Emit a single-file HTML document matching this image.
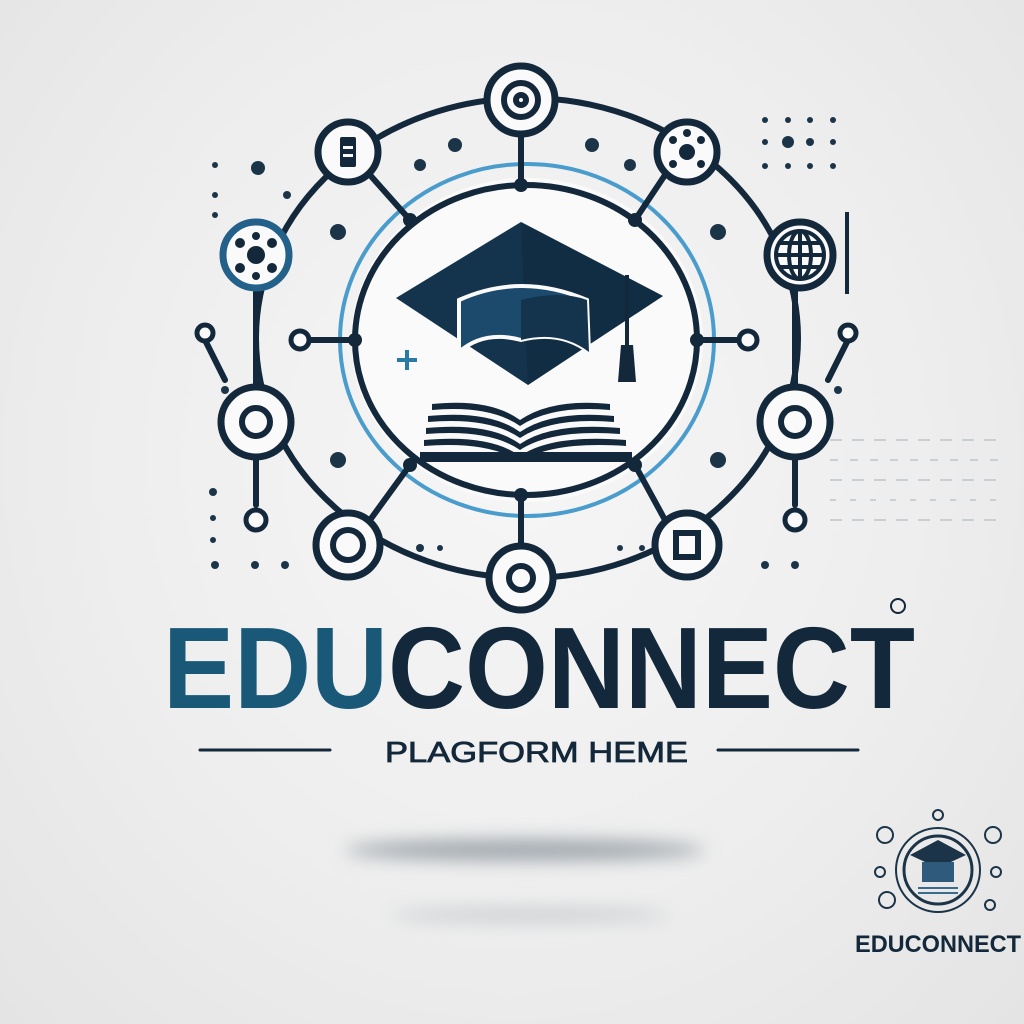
<!DOCTYPE html>
<html><head><meta charset="utf-8"><style>
html,body{margin:0;padding:0;width:1024px;height:1024px;overflow:hidden}
body{background:radial-gradient(ellipse at 50% 45%,#f6f6f6 0%,#eeeeee 55%,#e4e4e4 100%)}
svg{display:block}
</style></head><body>
<svg width="1024" height="1024" viewBox="0 0 1024 1024" xmlns="http://www.w3.org/2000/svg">
<defs>
<filter id="b" x="-50%" y="-200%" width="200%" height="500%"><feGaussianBlur stdDeviation="9"/></filter>
</defs>
<g fill="#1c3448">
<circle cx="215" cy="165" r="3"/><circle cx="258" cy="168" r="7"/><circle cx="287" cy="195" r="4"/><circle cx="215" cy="195" r="3"/><circle cx="215" cy="215" r="3"/>
<circle cx="213" cy="492" r="4"/><circle cx="213" cy="518" r="3"/><circle cx="213" cy="540" r="3"/>
<circle cx="215" cy="565" r="4"/><circle cx="255" cy="565" r="4"/><circle cx="285" cy="565" r="4"/>
<circle cx="420" cy="548" r="4"/><circle cx="440" cy="548" r="3"/><circle cx="620" cy="548" r="3"/><circle cx="642" cy="548" r="3"/>
<circle cx="338" cy="232" r="8"/><circle cx="338" cy="460" r="8"/><circle cx="718" cy="232" r="8"/><circle cx="718" cy="460" r="8"/>
<circle cx="455" cy="145" r="7"/><circle cx="592" cy="145" r="7"/><circle cx="420" cy="165" r="6"/><circle cx="630" cy="165" r="6"/>
<circle cx="225" cy="390" r="4"/><circle cx="838" cy="390" r="4"/>
<circle cx="765" cy="120" r="3"/><circle cx="788" cy="120" r="3"/><circle cx="810" cy="120" r="3"/><circle cx="833" cy="120" r="3"/>
<circle cx="788" cy="142" r="6"/><circle cx="810" cy="142" r="4"/><circle cx="833" cy="142" r="3"/><circle cx="765" cy="142" r="3"/>
<circle cx="765" cy="166" r="3"/><circle cx="788" cy="166" r="3"/><circle cx="810" cy="166" r="3"/><circle cx="833" cy="166" r="3"/>
<circle cx="765" cy="565" r="4"/><circle cx="795" cy="565" r="4"/>
</g>
<g stroke="#c9cfd4" stroke-width="2">
<line x1="830" y1="440" x2="1000" y2="440" stroke-dasharray="12 10"/>
<line x1="830" y1="460" x2="1000" y2="460" stroke-dasharray="8 12"/>
<line x1="830" y1="480" x2="1000" y2="480" stroke-dasharray="12 10"/>
<line x1="830" y1="500" x2="1000" y2="500" stroke-dasharray="6 14"/>
<line x1="830" y1="520" x2="1000" y2="520" stroke-dasharray="12 10"/>
</g>
<ellipse cx="527" cy="340" rx="187" ry="176" fill="none" stroke="#4a9ccc" stroke-width="4"/>
<ellipse cx="527" cy="340" rx="176" ry="162" fill="#fafafa" stroke="none"/>
<g fill="none" stroke="#13283a" stroke-width="6" stroke-linecap="round">
<ellipse cx="527" cy="338" rx="271" ry="240"/>
<ellipse cx="526" cy="340" rx="171" ry="155"/>
<line x1="521" y1="130" x2="521" y2="185"/>
<line x1="521" y1="495" x2="521" y2="550"/>
<line x1="370" y1="175" x2="410" y2="220"/>
<line x1="665" y1="175" x2="635" y2="220"/>
<line x1="370" y1="520" x2="410" y2="465"/>
<line x1="665" y1="520" x2="635" y2="465"/>
<line x1="310" y1="340" x2="355" y2="340"/>
<line x1="697" y1="340" x2="740" y2="340"/>
<line x1="256" y1="288" x2="256" y2="390"/>
<line x1="795" y1="288" x2="795" y2="390"/>
<line x1="256" y1="455" x2="256" y2="505"/>
<line x1="795" y1="455" x2="795" y2="505"/>
<line x1="205" y1="340" x2="225" y2="380"/>
<line x1="848" y1="340" x2="828" y2="380"/>
</g>
<g fill="#fafafa" stroke="#13283a" stroke-width="7">
<circle cx="521" cy="100" r="34"/>
<circle cx="348" cy="152" r="30"/>
<circle cx="687" cy="152" r="30"/>
<circle cx="256" cy="255" r="33" stroke="#23608a"/>
<circle cx="800" cy="255" r="33"/>
<circle cx="256" cy="422" r="35"/>
<circle cx="795" cy="422" r="35"/>
<circle cx="348" cy="545" r="32"/>
<circle cx="521" cy="578" r="32"/>
<circle cx="687" cy="545" r="32"/>
</g>
<g fill="none" stroke="#13283a" stroke-width="6">
<circle cx="521" cy="100" r="17"/><circle cx="521" cy="100" r="5"/>
<circle cx="256" cy="422" r="14"/><circle cx="795" cy="422" r="14"/>
<circle cx="348" cy="545" r="15"/><circle cx="521" cy="578" r="12"/>
<rect x="676" y="533" width="22" height="24"/>
<circle cx="205" cy="333" r="8" fill="#fafafa" stroke-width="5"/>
<circle cx="848" cy="333" r="8" fill="#fafafa" stroke-width="5"/>
<circle cx="300" cy="340" r="9" fill="#fafafa" stroke-width="5"/>
<circle cx="748" cy="340" r="9" fill="#fafafa" stroke-width="5"/>
<circle cx="256" cy="520" r="10" fill="#fafafa" stroke-width="5"/>
<circle cx="795" cy="520" r="10" fill="#fafafa" stroke-width="5"/>
</g>
<g fill="#13283a">
<rect x="340" y="137" width="16" height="30" rx="2"/>
<rect x="343" y="146" width="10" height="3" fill="#fafafa"/><rect x="343" y="154" width="10" height="3" fill="#fafafa"/>
<circle cx="687" cy="152" r="8"/><circle cx="673" cy="140" r="4"/><circle cx="701" cy="140" r="4"/><circle cx="673" cy="164" r="4"/><circle cx="701" cy="164" r="4"/><circle cx="687" cy="133" r="4"/>
<circle cx="256" cy="255" r="9"/><circle cx="240" cy="243" r="5"/><circle cx="272" cy="243" r="5"/><circle cx="240" cy="268" r="5"/><circle cx="272" cy="268" r="5"/><circle cx="256" cy="236" r="4"/><circle cx="256" cy="276" r="4"/>
<circle cx="521" cy="185" r="7"/><circle cx="521" cy="495" r="7"/><circle cx="355" cy="340" r="7"/><circle cx="697" cy="340" r="7"/>
<circle cx="410" cy="220" r="7"/><circle cx="635" cy="220" r="7"/><circle cx="410" cy="465" r="7"/><circle cx="635" cy="465" r="7"/>
<rect x="845" y="212" width="4" height="82"/>
</g>
<g fill="none" stroke="#13283a" stroke-width="4">
<circle cx="800" cy="255" r="24"/>
<ellipse cx="800" cy="255" rx="11" ry="24"/>
<line x1="800" y1="231" x2="800" y2="279"/><line x1="776" y1="255" x2="824" y2="255"/>
<line x1="780" y1="243" x2="820" y2="243"/><line x1="780" y1="267" x2="820" y2="267"/>
</g>
<polygon points="521,222 396,298 528,385 663,296" fill="#14334c"/>
<path d="M521 222 L663 296 L528 385 Z" fill="#0f2a40" opacity="0.6"/>
<path d="M459 300 Q521 272 587 300 L589 352 Q560 330 521 340 Q484 330 459 352 Z" fill="#1b4a6c" stroke="#fafafa" stroke-width="4"/>
<path d="M521 300 Q560 290 587 300 L589 352 Q560 330 521 340 Z" fill="#14334c"/>
<rect x="625" y="275" width="4" height="70" fill="#13283a"/>
<polygon points="621,345 633,345 636,382 618,382" fill="#13283a"/>
<g stroke="#2a7aa8" stroke-width="4"><line x1="397" y1="360" x2="417" y2="360"/><line x1="407" y1="350" x2="407" y2="370"/></g>
<g fill="#13283a">
<path d="M432 404 Q490 398 520 420 Q552 398 610 404 L610 410 Q552 405 520 426 Q490 405 432 410Z"/>
<path d="M428 416 Q490 410 520 432 Q552 410 614 416 L614 422 Q552 417 520 438 Q490 417 428 422Z"/>
<path d="M426 428 Q490 422 520 444 Q552 422 620 428 L620 434 Q552 429 520 450 Q490 429 426 434Z"/>
<path d="M424 440 Q490 434 520 456 Q552 434 626 440 L626 446 Q552 441 520 462 Q490 441 424 446Z"/>
<rect x="420" y="452" width="212" height="10"/>
</g>
<text x="163" y="708" textLength="752" lengthAdjust="spacingAndGlyphs" font-family="Liberation Sans, sans-serif" font-weight="bold" font-size="116" fill="#13283a"><tspan fill="#1a5878">EDU</tspan>CONNECT</text>
<circle cx="898" cy="606" r="7" fill="none" stroke="#13283a" stroke-width="2"/>
<text x="385" y="762" textLength="303" lengthAdjust="spacingAndGlyphs" font-family="Liberation Sans, sans-serif" font-size="29" fill="#13283a" stroke="#13283a" stroke-width="0.8">PLAGFORM HEME</text>
<g stroke="#13283a" stroke-width="3" stroke-linecap="round"><line x1="200" y1="750" x2="330" y2="750"/><line x1="718" y1="750" x2="858" y2="750"/></g>
<ellipse cx="525" cy="850" rx="180" ry="10" fill="#9aa2a8" filter="url(#b)"/>
<ellipse cx="530" cy="915" rx="140" ry="6" fill="#c4c8cc" filter="url(#b)"/>
<g fill="none" stroke="#1c3448" stroke-width="2">
<circle cx="938" cy="870" r="42"/>
<circle cx="938" cy="870" r="34" stroke-width="3"/>
<circle cx="885" cy="835" r="8"/><circle cx="993" cy="835" r="8"/><circle cx="880" cy="872" r="5"/><circle cx="996" cy="872" r="5"/>
<circle cx="887" cy="900" r="8"/><circle cx="990" cy="905" r="5"/><circle cx="938" cy="815" r="5"/>
</g>
<path d="M910 855 L938 840 L966 855 L938 868Z" fill="#1c3448"/>
<rect x="922" y="862" width="32" height="20" fill="#2f5a7c"/>
<g stroke="#3a6a8c" stroke-width="2"><line x1="918" y1="888" x2="958" y2="888"/><line x1="918" y1="893" x2="958" y2="893"/></g>
<text x="855" y="952" textLength="166" lengthAdjust="spacingAndGlyphs" font-family="Liberation Sans, sans-serif" font-weight="bold" font-size="24" fill="#13283a">EDUCONNECT</text>
</svg>
</body></html>
